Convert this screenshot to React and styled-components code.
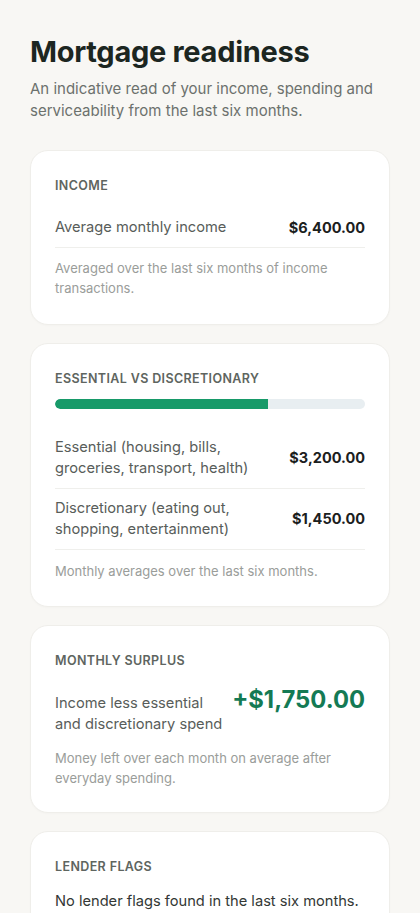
import React from "react";
import styled, { createGlobalStyle } from "styled-components";

const GlobalStyle = createGlobalStyle`
  body {
    margin: 0;
    background: #f8f7f4;
    font-family: "Inter", "Noto Sans", sans-serif;
    -webkit-font-smoothing: antialiased;
  }
`;

const Page = styled.main`
  padding: 34px 30px 40px;
  display: flex;
  flex-direction: column;
`;

const Title = styled.h1`
  margin: 0;
  font-size: 29px;
  font-weight: 700;
  letter-spacing: -0.01em;
  color: #1c2621;
  line-height: 36px;
`;

const Subtitle = styled.p`
  margin: 8px 0 29px;
  font-size: 15px;
  line-height: 21.5px;
  color: #6c716d;
`;

const Cards = styled.div`
  display: flex;
  flex-direction: column;
  gap: 18px;
`;

const Card = styled.section`
  background: #ffffff;
  border: 1px solid #efeeea;
  border-radius: 18px;
  padding: ${(p) => p.$top || 25}px 24px ${(p) => p.$bottom || 25}px;
  box-shadow: 0 1px 2px rgba(0, 0, 0, 0.02);
`;

const Label = styled.h2`
  margin: 0 0 ${(p) => p.$gap || 12}px;
  font-size: 12.5px;
  line-height: 18px;
  font-weight: 600;
  letter-spacing: 0.03em;
  text-transform: uppercase;
  color: #5e6560;
`;

const Row = styled.div`
  display: flex;
  justify-content: space-between;
  align-items: center;
  gap: 16px;
  padding: 9px 0;
  border-bottom: 1px solid #efefec;
`;

const SurplusRow = styled.div`
  display: flex;
  justify-content: space-between;
  align-items: flex-start;
  gap: 6px;
`;

const RowLabel = styled.span`
  font-size: 14.65px;
  line-height: 21px;
  color: #585d5a;
  padding-top: ${(p) => p.$offset || 0}px;
  white-space: ${(p) => (p.$nowrap ? "nowrap" : "normal")};
`;

const Amount = styled.span`
  font-size: 14.5px;
  font-weight: 700;
  color: #1b201d;
  white-space: nowrap;
`;

const Surplus = styled.span`
  font-size: 23.8px;
  font-weight: 700;
  line-height: 30px;
  color: #147a54;
  white-space: nowrap;
`;

const Note = styled.p`
  margin: ${(p) => p.$gap || 10}px 0 0;
  font-size: 13px;
  line-height: 20px;
  color: #9a9d9a;
`;

const Track = styled.div`
  height: 10px;
  border-radius: 5px;
  background: #e8eef1;
  overflow: hidden;
  margin-bottom: 18.5px;
`;

const Fill = styled.div`
  height: 100%;
  background: #179a69;
  border-radius: 5px 0 0 5px;
`;

const Body = styled.p`
  margin: 0;
  font-size: 14.65px;
  line-height: 22px;
  color: #333835;
`;

export default function App() {
  const essential = 3200;
  const discretionary = 1450;
  const share = (essential / (essential + discretionary)) * 100;

  return (
    <>
      <GlobalStyle />
      <Page>
        <Title>Mortgage readiness</Title>
        <Subtitle>
          An indicative read of your income, spending and serviceability from
          the last six months.
        </Subtitle>
        <Cards>
          <Card $top={26} $bottom={26}>
            <Label $gap={13}>Income</Label>
            <Row>
              <RowLabel>Average monthly income</RowLabel>
              <Amount>$6,400.00</Amount>
            </Row>
            <Note>Averaged over the last six months of income transactions.</Note>
          </Card>

          <Card $top={26} $bottom={25}>
            <Label $gap={11}>Essential vs discretionary</Label>
            <Track>
              <Fill style={{ width: `${share}%` }} />
            </Track>
            <Row>
              <RowLabel>
                Essential (housing, bills,
                <br />
                groceries, transport, health)
              </RowLabel>
              <Amount>$3,200.00</Amount>
            </Row>
            <Row>
              <RowLabel>
                Discretionary (eating out,
                <br />
                shopping, entertainment)
              </RowLabel>
              <Amount>$1,450.00</Amount>
            </Row>
            <Note $gap={11}>Monthly averages over the last six months.</Note>
          </Card>

          <Card $top={26} $bottom={24}>
            <Label $gap={15}>Monthly surplus</Label>
            <SurplusRow>
              <RowLabel $offset={8.5} $nowrap>
                Income less essential
                <br />
                and discretionary spend
              </RowLabel>
              <Surplus>+$1,750.00</Surplus>
            </SurplusRow>
            <Note $gap={12.5}>
              Money left over each month on average after everyday spending.
            </Note>
          </Card>

          <Card $top={26}>
            <Label $gap={14}>Lender flags</Label>
            <Body>No lender flags found in the last six months.</Body>
          </Card>
        </Cards>
      </Page>
    </>
  );
}
